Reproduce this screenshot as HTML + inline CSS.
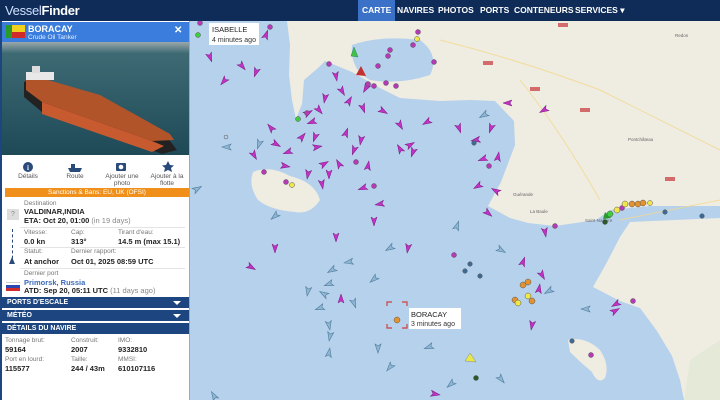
<!DOCTYPE html>
<html><head><meta charset="utf-8"><style>
*{margin:0;padding:0;box-sizing:border-box}
body{width:720px;height:400px;overflow:hidden;font-family:"Liberation Sans",sans-serif;background:#b6d1ec;position:relative}
#hdr{position:absolute;left:0;top:0;width:720px;height:21px;background:#0f2c58}
#logo{position:absolute;left:5px;top:3px;color:#fff;font-size:13px;letter-spacing:-0.3px}
#logo b{font-weight:bold}#logo span{color:#cfe0ff}
.nav{position:absolute;top:0;height:21px;line-height:20px;color:#fff;font-size:8.5px;font-weight:bold;padding:0 4px}
#map{position:absolute;left:190px;top:21px}
#panel{position:absolute;left:0;top:21px;width:190px;height:379px;background:#fff;border-left:2px solid #1d4680;border-right:1px solid #9ab}
.lbl{position:absolute;font-size:6.5px;color:#777}
.val{position:absolute;font-size:7.5px;color:#222;font-weight:bold}
.sec{position:absolute;left:0;width:187px;height:12px;background:#1d4680;color:#fff;font-size:7px;font-weight:bold;line-height:12px;padding-left:5px;border-bottom:1px solid #fff}
.sec i{position:absolute;right:8px;top:4px;width:0;height:0;border-left:4px solid transparent;border-right:4px solid transparent;border-top:4px solid #fff}
.ic{position:absolute;top:152px;font-size:6.5px;color:#555;text-align:center;width:44px;line-height:7px}
.hr{position:absolute;left:18px;right:4px;height:1px;background:#e4e4e4}
</style></head><body>
<div id="hdr"><div id="logo"><span>Vessel</span><b>Finder</b></div>
<div class="nav" style="left:358px;background:#3b72c8;">CARTE</div>
<div class="nav" style="left:393px">NAVIRES</div>
<div class="nav" style="left:434px">PHOTOS</div>
<div class="nav" style="left:476px">PORTS</div>
<div class="nav" style="left:510px">CONTENEURS</div>
<div class="nav" style="left:571px">SERVICES ▾</div>
</div>
<svg id="map" width="530" height="379" viewBox="190 21 530 379">
<defs>
<path id="a" d="M0,-5 L3,4 L0,2 L-3,4Z" fill="#c232c4" stroke="#7a1a80" stroke-width="0.5"/>
<path id="b" d="M0,-5 L3,4 L0,2 L-3,4Z" fill="#8fb6d4" stroke="#4f7c9c" stroke-width="0.6"/>
</defs>
<rect x="190" y="21" width="530" height="379" fill="#b6d1ec"/>
<path d="M287,21 L290,45 L289,75 L292,100 L296,119 L302,104 L304,80 L318,68 L325,61 L352,72 L380,88 L400,98 L440,101 L470,100 L495,101 L514,121 L515,145 L501,182 L488,206 L510,218 L528,223 L555,226 L596,220 L610,210 L650,206 L720,206 L720,21Z" fill="#efece2"/>
<path d="M352,45 Q380,35 420,40 Q440,55 430,75 Q400,85 370,80 Q350,70 352,45Z" fill="#b6d1ec"/>
<path d="M720,218 L630,222 L620,237 L606,264 L593,287 L620,301 L640,308 L657,331 L672,356 L680,380 L684,400 L720,400Z" fill="#efece2"/>
<path d="M720,340 L690,360 L684,400 L720,400Z" fill="#e5ead8"/>
<path d="M253,172 Q270,165 290,176 Q315,182 320,200 Q310,215 295,212 Q270,210 258,200 Q248,185 253,172Z" fill="#efece2"/>
<path d="M568,340 Q585,336 600,350 Q610,365 605,378 Q598,385 592,372 Q580,362 570,352Z" fill="#efece2"/>
<g stroke="#f3d98c" stroke-width="1" fill="none" opacity="0.8">
<path d="M440,40 Q520,60 600,90 Q660,120 720,150"/><path d="M520,80 Q560,130 600,200"/><path d="M620,220 L720,200"/>
</g>
<g fill="#d46b6b"><rect x="558" y="23" width="10" height="4"/><rect x="483" y="61" width="10" height="4"/><rect x="530" y="87" width="10" height="4"/><rect x="580" y="108" width="10" height="4"/><rect x="665" y="177" width="10" height="4"/></g>
<g font-family="Liberation Sans" font-size="4.5" fill="#666"><text x="513" y="196">Guérande</text><text x="530" y="213">La Baule</text><text x="585" y="222">Saint-Nazaire</text><text x="628" y="141">Pontchâteau</text><text x="675" y="37">Redon</text></g>
<g>
<use href="#a" transform="translate(210,57) rotate(160)"/><use href="#a" transform="translate(242,66) rotate(140)"/><use href="#a" transform="translate(256,72) rotate(200)"/><use href="#a" transform="translate(224,81) rotate(220)"/><use href="#a" transform="translate(266,35) rotate(20)"/>
<use href="#a" transform="translate(336,76) rotate(170)"/><use href="#a" transform="translate(342,91) rotate(150)"/><use href="#a" transform="translate(325,98) rotate(190)"/><use href="#a" transform="translate(349,101) rotate(30)"/><use href="#a" transform="translate(363,108) rotate(160)"/><use href="#a" transform="translate(366,88) rotate(210)"/>
<use href="#a" transform="translate(308,113) rotate(60)"/><use href="#a" transform="translate(319,110) rotate(140)"/><use href="#a" transform="translate(312,122) rotate(250)"/><use href="#a" transform="translate(271,128) rotate(320)"/><use href="#a" transform="translate(302,137) rotate(40)"/><use href="#a" transform="translate(315,137) rotate(200)"/>
<use href="#a" transform="translate(346,133) rotate(20)"/><use href="#a" transform="translate(361,140) rotate(190)"/><use href="#a" transform="translate(276,144) rotate(120)"/><use href="#a" transform="translate(288,152) rotate(250)"/><use href="#a" transform="translate(317,147) rotate(80)"/><use href="#a" transform="translate(254,155) rotate(150)"/>
<use href="#a" transform="translate(285,166) rotate(100)"/><use href="#a" transform="translate(308,174) rotate(190)"/><use href="#a" transform="translate(324,164) rotate(60)"/><use href="#a" transform="translate(339,164) rotate(330)"/><use href="#a" transform="translate(329,174) rotate(180)"/><use href="#a" transform="translate(322,184) rotate(170)"/><use href="#a" transform="translate(368,166) rotate(10)"/><use href="#a" transform="translate(354,150) rotate(200)"/>
<use href="#a" transform="translate(383,111) rotate(120)"/><use href="#a" transform="translate(400,125) rotate(150)"/><use href="#a" transform="translate(427,122) rotate(240)"/><use href="#a" transform="translate(400,149) rotate(330)"/><use href="#a" transform="translate(410,145) rotate(60)"/><use href="#a" transform="translate(413,152) rotate(200)"/>
<use href="#a" transform="translate(363,188) rotate(250)"/><use href="#a" transform="translate(380,204) rotate(260)"/><use href="#a" transform="translate(374,221) rotate(180)"/><use href="#a" transform="translate(336,237) rotate(180)"/><use href="#a" transform="translate(275,248) rotate(180)"/><use href="#a" transform="translate(251,267) rotate(120)"/><use href="#a" transform="translate(408,248) rotate(190)"/>
<use href="#a" transform="translate(459,128) rotate(160)"/><use href="#a" transform="translate(491,128) rotate(200)"/><use href="#a" transform="translate(476,140) rotate(260)"/><use href="#a" transform="translate(483,159) rotate(250)"/><use href="#a" transform="translate(498,157) rotate(10)"/><use href="#a" transform="translate(478,186) rotate(240)"/><use href="#a" transform="translate(496,191) rotate(300)"/><use href="#a" transform="translate(488,213) rotate(130)"/><use href="#a" transform="translate(508,103) rotate(270)"/>
<use href="#a" transform="translate(545,232) rotate(170)"/><use href="#a" transform="translate(523,262) rotate(20)"/><use href="#a" transform="translate(542,275) rotate(150)"/><use href="#a" transform="translate(539,289) rotate(10)"/><use href="#a" transform="translate(341,299) rotate(0)"/><use href="#a" transform="translate(532,325) rotate(190)"/><use href="#a" transform="translate(616,304) rotate(240)"/><use href="#a" transform="translate(615,311) rotate(60)"/><use href="#a" transform="translate(435,394) rotate(100)"/><use href="#a" transform="translate(544,110) rotate(240)"/>
</g>
<g>
<use href="#b" transform="translate(197,189) rotate(60)"/><use href="#b" transform="translate(227,147) rotate(270)"/><use href="#b" transform="translate(259,144) rotate(200)"/><use href="#b" transform="translate(275,216) rotate(230)"/><use href="#b" transform="translate(457,226) rotate(20)"/><use href="#b" transform="translate(390,248) rotate(240)"/><use href="#b" transform="translate(374,279) rotate(230)"/><use href="#b" transform="translate(349,262) rotate(260)"/><use href="#b" transform="translate(332,270) rotate(240)"/><use href="#b" transform="translate(329,284) rotate(250)"/><use href="#b" transform="translate(308,291) rotate(190)"/><use href="#b" transform="translate(324,294) rotate(300)"/><use href="#b" transform="translate(320,308) rotate(250)"/><use href="#b" transform="translate(354,303) rotate(160)"/><use href="#b" transform="translate(329,325) rotate(170)"/><use href="#b" transform="translate(330,336) rotate(190)"/><use href="#b" transform="translate(329,353) rotate(10)"/><use href="#b" transform="translate(378,348) rotate(180)"/><use href="#b" transform="translate(390,367) rotate(220)"/><use href="#b" transform="translate(429,347) rotate(250)"/><use href="#b" transform="translate(451,384) rotate(230)"/><use href="#b" transform="translate(501,379) rotate(140)"/><use href="#b" transform="translate(214,396) rotate(330)"/><use href="#b" transform="translate(586,309) rotate(270)"/><use href="#b" transform="translate(549,291) rotate(240)"/><use href="#b" transform="translate(501,250) rotate(120)"/><use href="#b" transform="translate(484,115) rotate(240)"/>
</g>
<path d="M470,353 L476,362 L465,361Z" fill="#e8e84a" stroke="#888" stroke-width="0.5"/>
<path d="M354,47 L358,57 L351,56Z" fill="#44c044" stroke="#286" stroke-width="0.5"/>
<path d="M361,66 L366,76 L356,75Z" fill="#c23030"/>
<path d="M605,212 L611,218 L603,219Z" fill="#2a9a2a"/>
<g stroke="#555" stroke-width="0.5">
<g fill="#b63ab8"><circle cx="270" cy="27" r="2.5"/><circle cx="418" cy="32" r="2.5"/><circle cx="413" cy="45" r="2.5"/><circle cx="390" cy="50" r="2.5"/><circle cx="388" cy="56" r="2.5"/><circle cx="329" cy="64" r="2.5"/><circle cx="378" cy="66" r="2.5"/><circle cx="434" cy="62" r="2.5"/><circle cx="368" cy="84" r="2.5"/><circle cx="374" cy="86" r="2.5"/><circle cx="386" cy="83" r="2.5"/><circle cx="396" cy="86" r="2.5"/><circle cx="307" cy="113" r="2.5"/><circle cx="356" cy="162" r="2.5"/><circle cx="264" cy="172" r="2.5"/><circle cx="286" cy="182" r="2.5"/><circle cx="374" cy="186" r="2.5"/><circle cx="489" cy="166" r="2.5"/><circle cx="454" cy="255" r="2.5"/><circle cx="555" cy="226" r="2.5"/><circle cx="591" cy="355" r="2.5"/><circle cx="633" cy="301" r="2.5"/><circle cx="622" cy="208" r="2.5"/><circle cx="200" cy="23" r="2.5"/></g>
<g fill="#3d6a92"><circle cx="474" cy="143" r="2.3"/><circle cx="470" cy="264" r="2.3"/><circle cx="465" cy="271" r="2.3"/><circle cx="480" cy="276" r="2.3"/><circle cx="665" cy="212" r="2.3"/><circle cx="702" cy="216" r="2.3"/><circle cx="572" cy="341" r="2.3"/><circle cx="226" cy="137" r="2" fill="none"/></g>
<g fill="#e2922e"><circle cx="523" cy="285" r="3"/><circle cx="528" cy="282" r="3"/><circle cx="515" cy="300" r="3"/><circle cx="532" cy="301" r="3"/><circle cx="632" cy="204" r="3"/><circle cx="638" cy="204" r="3"/><circle cx="643" cy="203" r="3"/><circle cx="397" cy="320" r="3"/></g>
<g fill="#f0e84a"><circle cx="518" cy="303" r="3"/><circle cx="528" cy="296" r="3"/><circle cx="625" cy="204" r="3"/><circle cx="617" cy="210" r="3"/><circle cx="650" cy="203" r="2.5"/><circle cx="292" cy="185" r="2.5"/><circle cx="417" cy="39" r="2.5"/></g>
<g fill="#3fcc3f"><circle cx="198" cy="35" r="2.5"/><circle cx="298" cy="119" r="2.5"/><circle cx="610" cy="214" r="3"/></g>
<g fill="#2a5a2a"><circle cx="476" cy="378" r="2.5"/><circle cx="605" cy="222" r="2.5"/></g>
</g>
<rect x="209" y="23" width="50" height="22" fill="#fff"/>
<text x="212" y="32" font-family="Liberation Sans" font-size="7.5" fill="#222">ISABELLE</text>
<text x="212" y="42" font-family="Liberation Sans" font-size="7" fill="#333">4 minutes ago</text>
<rect x="409" y="308" width="52" height="21" fill="#fff"/>
<text x="411" y="317" font-family="Liberation Sans" font-size="7.5" fill="#222">BORACAY</text>
<text x="411" y="326" font-family="Liberation Sans" font-size="7" fill="#333">3 minutes ago</text>
<g stroke="#d04040" stroke-width="1.2" fill="none"><path d="M387,306 V302 H392"/><path d="M402,302 H407 V306"/><path d="M387,324 V328 H392"/><path d="M402,328 H407 V324"/></g>
</svg>

<div id="panel">
<div style="position:absolute;left:0;top:1px;width:187px;height:20px;background:#3a7ddc"></div>
<div style="position:absolute;left:4px;top:4px;width:6px;height:13px;background:#2a9a2a"></div>
<div style="position:absolute;left:10px;top:4px;width:13px;height:7px;background:#f2d020"></div>
<div style="position:absolute;left:10px;top:11px;width:13px;height:6px;background:#d02a2a"></div>
<div style="position:absolute;left:26px;top:3px;color:#fff;font-size:9px;font-weight:bold">BORACAY</div>
<div style="position:absolute;left:26px;top:13px;color:#e6efff;font-size:6.5px">Crude Oil Tanker</div>
<div style="position:absolute;left:172px;top:4px;color:#fff;font-size:10px;font-weight:bold">✕</div>
<svg style="position:absolute;left:0;top:21px" width="187" height="113">
<defs><linearGradient id="sea" x1="0" y1="0" x2="0" y2="1"><stop offset="0" stop-color="#9aa8ac"/><stop offset="0.1" stop-color="#3e6a74"/><stop offset="1" stop-color="#1e4a58"/></linearGradient></defs>
<rect width="187" height="113" fill="url(#sea)"/>
<path d="M22,40 L30,36 L95,55 L165,95 L175,108 L160,112 L130,100 L40,70 L22,55Z" fill="#222"/>
<path d="M24,38 L32,34 L98,53 L168,92 L172,98 L150,99 L40,60 L24,48Z" fill="#b2542a"/>
<path d="M40,60 L150,99 L162,104 L150,110 L40,72Z" fill="#c85a30"/>
<rect x="24" y="30" width="28" height="8" fill="#e8e8e8"/><rect x="30" y="24" width="8" height="7" fill="#ddd"/>
</svg>
<svg style="position:absolute;left:18px;top:139px" width="160" height="16">
<circle cx="8" cy="7" r="5" fill="#2a4a7a"/><text x="7" y="10" fill="#fff" font-size="7" font-weight="bold" font-family="Liberation Serif">i</text>
<path d="M48,8 L62,8 L60,12 L50,12Z M51,4 h4 v4 h-4Z" fill="#2a4a7a"/>
<rect x="96" y="3" width="10" height="8" rx="1" fill="#2a4a7a"/><circle cx="101" cy="7" r="2.3" fill="#fff"/>
<path d="M148,1 L150,5 L154,5.5 L151,8 L152,12 L148,10 L144,12 L145,8 L142,5.5 L146,5Z" fill="#2a4a7a"/>
</svg>
<div class="ic" style="left:4px">Détails</div>
<div class="ic" style="left:51px">Route</div>
<div class="ic" style="left:98px">Ajouter une photo</div>
<div class="ic" style="left:143px">Ajouter à la flotte</div>
<div style="position:absolute;left:3px;top:167px;width:184px;height:9px;background:#f0901a;color:#fff;font-size:6.5px;text-align:center;line-height:9px">Sanctions &amp; Bans: EU, UK (OFSI)</div>
<div style="position:absolute;left:5px;top:188px;width:12px;height:11px;background:#ddd;color:#888;font-size:7px;text-align:center;line-height:11px">?</div>
<div class="lbl" style="left:22px;top:179px">Destination</div>
<div class="val" style="left:22px;top:186px">VALDINAR,INDIA</div>
<div class="val" style="left:22px;top:195px">ETA: Oct 20, 01:00 <span style="font-weight:normal;color:#888">(in 19 days)</span></div>
<div class="hr" style="top:206px"></div>
<div style="position:absolute;left:10px;top:208px;width:1px;height:35px;border-left:1px dashed #2a4a7a"></div>
<div style="position:absolute;left:7px;top:236px;width:0;height:0;border-left:3px solid transparent;border-right:3px solid transparent;border-bottom:7px solid #2a4a7a"></div>
<div class="lbl" style="left:22px;top:208px">Vitesse:</div><div class="val" style="left:22px;top:216px">0.0 kn</div>
<div class="lbl" style="left:69px;top:208px">Cap:</div><div class="val" style="left:69px;top:216px">313°</div>
<div class="lbl" style="left:116px;top:208px">Tirant d'eau:</div><div class="val" style="left:116px;top:216px">14.5 m (max 15.1)</div>
<div class="hr" style="top:226px"></div>
<div class="lbl" style="left:22px;top:227px">Statut:</div><div class="val" style="left:22px;top:236px">At anchor</div>
<div class="lbl" style="left:69px;top:227px">Dernier rapport:</div><div class="val" style="left:69px;top:236px">Oct 01, 2025 08:59 UTC</div>
<div class="hr" style="top:247px"></div>
<div class="lbl" style="left:22px;top:249px">Dernier port</div>
<div style="position:absolute;left:22px;top:257px;font-size:7.5px;color:#3a6ab8;font-weight:bold">Primorsk, Russia</div>
<div class="val" style="left:22px;top:265px">ATD: Sep 20, 05:11 UTC <span style="font-weight:normal;color:#888">(11 days ago)</span></div>
<div style="position:absolute;left:4px;top:261px;width:14px;height:3px;background:#fff;border-top:1px solid #ccc"></div>
<div style="position:absolute;left:4px;top:264px;width:14px;height:3px;background:#2a46b0"></div>
<div style="position:absolute;left:4px;top:267px;width:14px;height:3px;background:#d02a2a"></div>
<div class="sec" style="top:276px">PORTS D'ESCALE<i></i></div>
<div class="sec" style="top:289px">MÉTÉO<i></i></div>
<div class="sec" style="top:302px">DÉTAILS DU NAVIRE</div>
<div class="lbl" style="left:3px;top:316px">Tonnage brut:</div><div class="val" style="left:3px;top:324px">59164</div>
<div class="lbl" style="left:69px;top:316px">Construit:</div><div class="val" style="left:69px;top:324px">2007</div>
<div class="lbl" style="left:116px;top:316px">IMO:</div><div class="val" style="left:116px;top:324px">9332810</div>
<div class="lbl" style="left:3px;top:335px">Port en lourd:</div><div class="val" style="left:3px;top:343px">115577</div>
<div class="lbl" style="left:69px;top:335px">Taille:</div><div class="val" style="left:69px;top:343px">244 / 43m</div>
<div class="lbl" style="left:116px;top:335px">MMSI:</div><div class="val" style="left:116px;top:343px">610107116</div>
</div>
</body></html>
